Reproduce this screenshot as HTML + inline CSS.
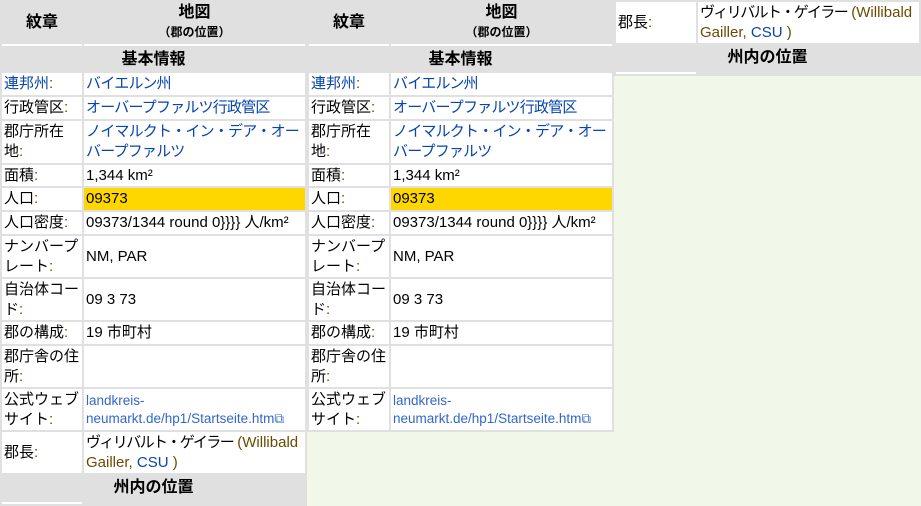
<!DOCTYPE html>
<html><head><meta charset="utf-8"><style>
body{margin:0;width:921px;height:504px;background:#f1f8ea;position:relative;overflow:hidden;font-family:"Liberation Sans","Noto Sans CJK JP",sans-serif;font-size:15px;color:#000}
table{position:absolute;border-collapse:separate;border-spacing:2px;background:#e0e0e0;table-layout:fixed}
td{background:#fff;padding:0 2px;line-height:20px;vertical-align:middle;overflow:hidden}
td.l{word-break:break-all;font-size:15px}
th{background:#e0e0e0;font-weight:bold;font-size:16px;padding:0;line-height:19px}
a,.a{color:#0645ad;text-decoration:none}
.c{color:#6b4a00}
.y{background:#ffd700}
.ext{font-size:13.5px;color:#3366cc}
small{font-size:12px}
.gap td{height:2px;padding:0;line-height:2px}
.j{font-size:15px;letter-spacing:-0.8px}
.k{letter-spacing:-1.6px}
</style></head><body>

<table style="left:0;top:0;width:307px">
<colgroup><col style="width:80px"><col style="width:221px"></colgroup>
<tr style="height:40px"><th>紋章</th><th>地図<br><small>（郡の位置）</small></th></tr>
<tr class="gap"><td></td><td></td></tr>
<tr style="height:23px"><th colspan="2">基本情報</th></tr>
<tr style="height:22px"><td class="l"><a>連邦州</a><span class="c">:</span></td><td class="v j"><a>バイエルン州</a></td></tr>
<tr style="height:22px"><td class="l">行政管区<span class="c">:</span></td><td class="v j"><a>オーバープファルツ行政管区</a></td></tr>
<tr style="height:42px"><td class="l">郡庁所在地<span class="c">:</span></td><td class="v j"><a>ノイマルクト・イン・デア・オーバープファルツ</a></td></tr>
<tr style="height:21px"><td class="l">面積<span class="c">:</span></td><td class="v">1,344 km²</td></tr>
<tr style="height:22px"><td class="l">人口<span class="c">:</span></td><td class="v y">09373</td></tr>
<tr style="height:22px"><td class="l">人口密度<span class="c">:</span></td><td class="v" style="white-space:nowrap">09373/1344 round 0}}}} 人/km²</td></tr>
<tr style="height:41px"><td class="l">ナンバープレート<span class="c">:</span></td><td class="v">NM, PAR</td></tr>
<tr style="height:41px"><td class="l">自治体コード<span class="c">:</span></td><td class="v">09 3 73</td></tr>
<tr style="height:22px"><td class="l">郡の構成<span class="c">:</span></td><td class="v">19 市町村</td></tr>
<tr style="height:41px"><td class="l">郡庁舎の住所<span class="c">:</span></td><td class="v"></td></tr>
<tr style="height:41px"><td class="l">公式ウェブサイト<span class="c">:</span></td><td class="v ext" style="line-height:18px;white-space:nowrap">landkreis-<br>neumarkt.de/hp1/Startseite.htm⧉</td></tr>
<tr style="height:41px"><td class="l">郡長<span class="c">:</span></td><td class="v"><span class="k">ヴィリバルト・ゲイラー</span> <span class="c">(Willibald Gailler,</span> <a>CSU</a> <span class="c">)</span></td></tr>
<tr style="height:25px"><th colspan="2">州内の位置</th></tr>
<tr class="gap"><td></td><td style="background:#e0e0e0"></td></tr>
</table>

<table style="left:307px;top:0;width:307px">
<colgroup><col style="width:80px"><col style="width:221px"></colgroup>
<tr style="height:40px"><th>紋章</th><th>地図<br><small>（郡の位置）</small></th></tr>
<tr class="gap"><td></td><td></td></tr>
<tr style="height:23px"><th colspan="2">基本情報</th></tr>
<tr style="height:22px"><td class="l"><a>連邦州</a><span class="c">:</span></td><td class="v j"><a>バイエルン州</a></td></tr>
<tr style="height:22px"><td class="l">行政管区<span class="c">:</span></td><td class="v j"><a>オーバープファルツ行政管区</a></td></tr>
<tr style="height:42px"><td class="l">郡庁所在地<span class="c">:</span></td><td class="v j"><a>ノイマルクト・イン・デア・オーバープファルツ</a></td></tr>
<tr style="height:21px"><td class="l">面積<span class="c">:</span></td><td class="v">1,344 km²</td></tr>
<tr style="height:22px"><td class="l">人口<span class="c">:</span></td><td class="v y">09373</td></tr>
<tr style="height:22px"><td class="l">人口密度<span class="c">:</span></td><td class="v" style="white-space:nowrap">09373/1344 round 0}}}} 人/km²</td></tr>
<tr style="height:41px"><td class="l">ナンバープレート<span class="c">:</span></td><td class="v">NM, PAR</td></tr>
<tr style="height:41px"><td class="l">自治体コード<span class="c">:</span></td><td class="v">09 3 73</td></tr>
<tr style="height:22px"><td class="l">郡の構成<span class="c">:</span></td><td class="v">19 市町村</td></tr>
<tr style="height:41px"><td class="l">郡庁舎の住所<span class="c">:</span></td><td class="v"></td></tr>
<tr style="height:41px"><td class="l">公式ウェブサイト<span class="c">:</span></td><td class="v ext" style="line-height:18px;white-space:nowrap">landkreis-<br>neumarkt.de/hp1/Startseite.htm⧉</td></tr>
</table>

<table style="left:614px;top:0;width:307px">
<colgroup><col style="width:80px"><col style="width:221px"></colgroup>
<tr style="height:41px"><td class="l">郡長<span class="c">:</span></td><td class="v"><span class="k">ヴィリバルト・ゲイラー</span> <span class="c">(Willibald Gailler,</span> <a>CSU</a> <span class="c">)</span></td></tr>
<tr style="height:25px"><th colspan="2">州内の位置</th></tr>
<tr class="gap"><td></td><td style="background:#e0e0e0"></td></tr>
</table>

</body></html>
